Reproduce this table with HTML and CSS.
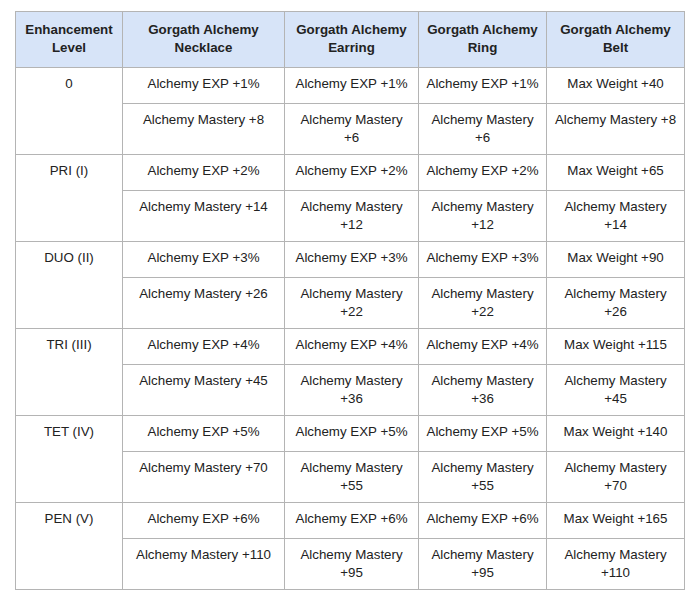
FILE: index.html
```html
<!DOCTYPE html>
<html>
<head>
<meta charset="utf-8">
<link rel="stylesheet" href="styles.css">
</head>
<body>
<table class="gear">
  <colgroup>
    <col class="c-level">
    <col class="c-neck">
    <col class="c-ear">
    <col class="c-ring">
    <col class="c-belt">
  </colgroup>
  <thead>
    <tr>
      <th>Enhancement Level</th>
      <th>Gorgath Alchemy Necklace</th>
      <th>Gorgath Alchemy Earring</th>
      <th>Gorgath Alchemy Ring</th>
      <th>Gorgath Alchemy Belt</th>
    </tr>
  </thead>
  <tbody>
    <tr class="r1"><td rowspan="2">0</td><td>Alchemy EXP +1%</td><td>Alchemy EXP +1%</td><td>Alchemy EXP +1%</td><td>Max Weight +40</td></tr>
    <tr class="r2"><td>Alchemy Mastery +8</td><td>Alchemy Mastery +6</td><td>Alchemy Mastery +6</td><td>Alchemy Mastery +8</td></tr>
    <tr class="r1"><td rowspan="2">PRI (I)</td><td>Alchemy EXP +2%</td><td>Alchemy EXP +2%</td><td>Alchemy EXP +2%</td><td>Max Weight +65</td></tr>
    <tr class="r2"><td>Alchemy Mastery +14</td><td>Alchemy Mastery +12</td><td>Alchemy Mastery +12</td><td>Alchemy Mastery +14</td></tr>
    <tr class="r1"><td rowspan="2">DUO (II)</td><td>Alchemy EXP +3%</td><td>Alchemy EXP +3%</td><td>Alchemy EXP +3%</td><td>Max Weight +90</td></tr>
    <tr class="r2"><td>Alchemy Mastery +26</td><td>Alchemy Mastery +22</td><td>Alchemy Mastery +22</td><td>Alchemy Mastery +26</td></tr>
    <tr class="r1"><td rowspan="2">TRI (III)</td><td>Alchemy EXP +4%</td><td>Alchemy EXP +4%</td><td>Alchemy EXP +4%</td><td>Max Weight +115</td></tr>
    <tr class="r2"><td>Alchemy Mastery +45</td><td>Alchemy Mastery +36</td><td>Alchemy Mastery +36</td><td>Alchemy Mastery +45</td></tr>
    <tr class="r1"><td rowspan="2">TET (IV)</td><td>Alchemy EXP +5%</td><td>Alchemy EXP +5%</td><td>Alchemy EXP +5%</td><td>Max Weight +140</td></tr>
    <tr class="r2"><td>Alchemy Mastery +70</td><td>Alchemy Mastery +55</td><td>Alchemy Mastery +55</td><td>Alchemy Mastery +70</td></tr>
    <tr class="r1"><td rowspan="2">PEN (V)</td><td>Alchemy EXP +6%</td><td>Alchemy EXP +6%</td><td>Alchemy EXP +6%</td><td>Max Weight +165</td></tr>
    <tr class="r2"><td>Alchemy Mastery +110</td><td>Alchemy Mastery +95</td><td>Alchemy Mastery +95</td><td>Alchemy Mastery +110</td></tr>
  </tbody>
</table>
</body>
</html>
```
FILE: styles.css
```css
html, body {
  margin: 0;
  padding: 0;
  background: #ffffff;
}
body {
  padding: 11px 0 0 15px;
  font-family: "Liberation Sans", Arial, sans-serif;
  font-size: 13.33px;
  line-height: 18px;
  color: #222222;
}
.gear {
  border-collapse: collapse;
  table-layout: fixed;
  width: 669px;
}
.c-level { width: 107px; }
.c-neck { width: 162px; }
.c-ear { width: 134px; }
.c-ring { width: 128px; }
.c-belt { width: 138px; }
.gear th,
.gear td {
  border: 1px solid #b4b4b4;
  text-align: center;
  padding: 7px 7px;
}
.gear th {
  background: #d7e4f8;
  font-weight: bold;
  height: 36px;
  padding: 9px 7px 10px;
  vertical-align: middle;
}
.gear td {
  vertical-align: top;
}
.gear tr.r1 td {
  height: 18px;
  padding-bottom: 10px;
}
.gear tr.r2 td {
  height: 36px;
  padding-bottom: 7px;
}
```
